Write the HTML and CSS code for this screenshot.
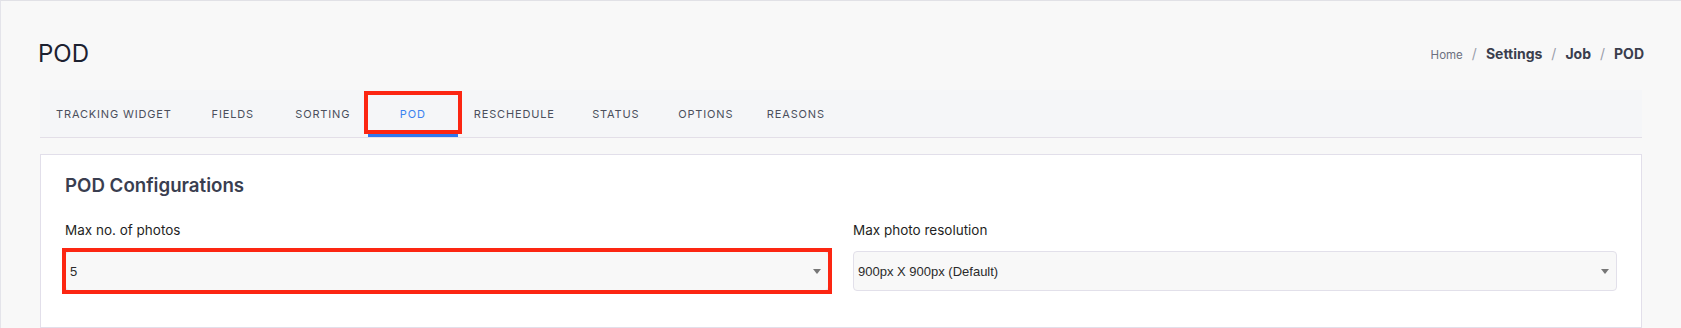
FILE: index.html
```html
<!DOCTYPE html>
<html lang="en">
<head>
  <meta charset="UTF-8">
  <meta name="viewport" content="width=device-width, initial-scale=1.0">
  <title>POD Settings</title>
  <link rel="stylesheet" href="styles.css">
</head>
<body>
  <div class="page">
    <!-- Title and breadcrumb -->
    <div class="page-header">
      <h1 class="page-title">POD</h1>
      <nav class="breadcrumb">
        <span class="crumb crumb-home">Home</span>
        <span class="sep">/</span>
        <span class="crumb">Settings</span>
        <span class="sep">/</span>
        <span class="crumb">Job</span>
        <span class="sep">/</span>
        <span class="crumb">POD</span>
      </nav>
    </div>

    <!-- Settings tabs -->
    <div class="tabs">
      <div class="tab">Tracking Widget</div>
      <div class="tab">Fields</div>
      <div class="tab">Sorting</div>
      <div class="tab active">POD<span class="mark mark-tab"></span></div>
      <div class="tab">Reschedule</div>
      <div class="tab">Status</div>
      <div class="tab">Options</div>
      <div class="tab">Reasons</div>
    </div>

    <!-- POD configuration card -->
    <div class="card">
      <h2 class="card-title">POD Configurations</h2>
      <div class="form-grid">
        <div class="form-group">
          <label class="form-label">Max no. of photos</label>
          <div class="select">
            <span class="select-value">5</span>
            <span class="caret"></span>
            <span class="mark mark-field"></span>
          </div>
        </div>
        <div class="form-group">
          <label class="form-label">Max photo resolution</label>
          <div class="select">
            <span class="select-value">900px X 900px (Default)</span>
            <span class="caret"></span>
          </div>
        </div>
      </div>
    </div>
  </div>
</body>
</html>
```

FILE: styles.css
```css
/* Base */
body {
  margin: 0;
  background: #f8f8f8;
  font-family: Inter, "Noto Sans", sans-serif;
  color: #1f2330;
}
.page {
  height: 327px;
  overflow: hidden;
  border-top: 1px solid #e1e1e6;
  border-left: 1px solid #e4e4ea;
  padding: 0 39px;
}

/* Header with breadcrumb */
.page-header {
  display: flex;
  align-items: center;
  justify-content: space-between;
  height: 74px;
  padding-top: 15px;
  margin: 0 -2px 0 -2px;
}
.page-title {
  margin: 0;
  font-size: 24px;
  font-weight: 400;
  line-height: 29px;
  color: #1c2130;
}
.breadcrumb {
  display: flex;
  align-items: baseline;
  gap: 9px;
  font-size: 14px;
  font-weight: 700;
  color: #3a3e4d;
}
.crumb-home {
  font-size: 11.5px;
  font-weight: 400;
  color: #6c7080;
}
.sep {
  font-weight: 400;
  color: #9a9eab;
}

/* Tabs */
.tabs {
  display: flex;
  background: #f5f6f8;
  border-bottom: 1px solid #e3dfe8;
}
.tab {
  position: relative;
  min-width: 90px;
  box-sizing: border-box;
  padding: 0 16px;
  height: 47px;
  line-height: 48px;
  text-align: center;
  font-size: 11px;
  letter-spacing: 0.85px;
  text-transform: uppercase;
  color: #4b4f5c;
  border-bottom: 3px solid transparent;
}
.tab.active {
  color: #3b82f0;
  border-bottom-color: #2f78ee;
}

/* Red highlight boxes drawn over content */
.mark {
  position: absolute;
  box-sizing: border-box;
  border: 4px solid #fc2612;
  pointer-events: none;
}
.mark-tab {
  left: -4px;
  right: -4px;
  top: 1px;
  bottom: 0;
}
.mark-field {
  top: -4px;
  left: -4px;
  right: -4px;
  bottom: -4px;
}

/* Card */
.card {
  margin-top: 16px;
  background: #fff;
  border: 1px solid #e2dfea;
  padding: 20px 24px 36px;
}
.card-title {
  margin: 0 0 23px;
  font-size: 18.7px;
  font-weight: 600;
  line-height: 22px;
  color: #3a3e50;
}
.form-grid {
  display: grid;
  grid-template-columns: 1fr 1fr;
  gap: 24px;
}
.form-label {
  display: block;
  margin-bottom: 11px;
  font-size: 13.5px;
  line-height: 20px;
  color: #1f1f24;
}
.select {
  position: relative;
  height: 40px;
  box-sizing: border-box;
  display: flex;
  align-items: center;
  padding: 0 4px;
  background: #f8f8f8;
  border: 1px solid #e2e0ea;
  border-radius: 4px;
  font-family: "Liberation Sans", Arial, sans-serif;
  font-size: 13px;
  color: #2b2b2b;
}
.select-value {
  flex: 1;
}
.caret {
  width: 0;
  height: 0;
  margin-right: 3px;
  border-left: 4.5px solid transparent;
  border-right: 4.5px solid transparent;
  border-top: 5px solid #777;
}
```
